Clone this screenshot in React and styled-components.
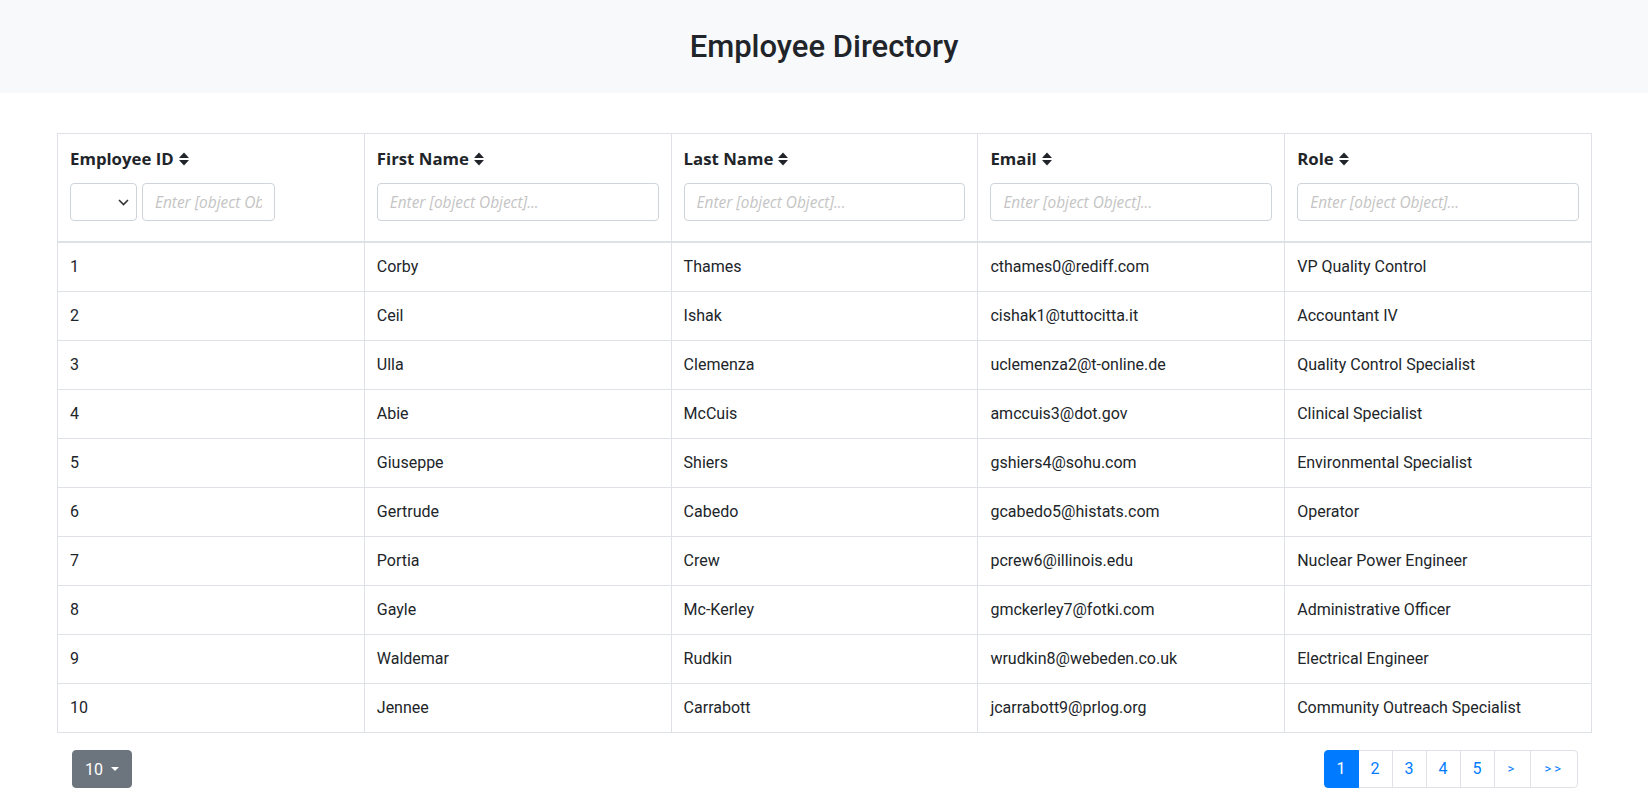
import React from 'react';
import styled, { createGlobalStyle } from 'styled-components';

const GlobalStyle = createGlobalStyle`
  body {
    margin: 0;
    font-family: 'Segoe UI', Roboto, 'Liberation Sans', sans-serif;
    font-size: 16px;
    line-height: 1.5;
    color: #212529;
    background: #fff;
  }
  * {
    box-sizing: border-box;
  }
`;

const Banner = styled.header`
  display: flex;
  align-items: center;
  justify-content: center;
  height: 93px;
  background-color: #f8f9fa;
`;

const Title = styled.h2`
  margin: 0;
  font-size: 31px;
  font-weight: 500;
  line-height: 1.2;
`;

const Main = styled.main`
  padding: 40px 56px 0 57px;
`;

const Table = styled.table`
  width: 100%;
  table-layout: fixed;
  border-collapse: collapse;
  border: 1px solid #dee2e6;
`;

const Th = styled.th`
  padding: 12px;
  text-align: left;
  vertical-align: top;
  border: 1px solid #dee2e6;
  border-bottom: 2px solid #dee2e6;
  font-family: 'Open Sans', Roboto, sans-serif;
  font-size: 16.8px;
  font-weight: 700;
`;

const Td = styled.td`
  padding: 12px;
  line-height: 24px;
  border: 1px solid #dee2e6;
`;

const HeadLabel = styled.div`
  display: flex;
  align-items: center;
  gap: 5px;
  height: 24px;
  padding-top: 2px;
`;

const FilterRow = styled.div`
  display: flex;
  gap: 5px;
  margin: 13px 0 8px;
`;

const TextInput = styled.input`
  width: ${(p) => p.$width || '100%'};
  height: 38px;
  padding: 6px 12px;
  font-family: 'Open Sans', Roboto, sans-serif;
  font-size: 15.4px;
  color: #495057;
  border: 1px solid #ced4da;
  border-radius: 4px;
  outline: none;

  &::placeholder {
    color: #c4c4c4;
    font-style: italic;
  }
`;

const SelectWrap = styled.div`
  position: relative;
  width: 67px;
  flex-shrink: 0;
`;

const Select = styled.select`
  width: 100%;
  height: 38px;
  appearance: none;
  background: #fff;
  border: 1px solid #ced4da;
  border-radius: 4px;
  padding: 6px 12px;
`;

const Chevron = styled.svg`
  position: absolute;
  right: 8px;
  top: 16px;
  pointer-events: none;
`;

const Footer = styled.div`
  display: flex;
  justify-content: space-between;
  align-items: center;
  padding: 0 14px 0 15px;
  margin-top: 17px;
`;

const SizeButton = styled.button`
  display: flex;
  align-items: center;
  gap: 8px;
  height: 38px;
  padding: 0 12px;
  font-family: inherit;
  font-size: 16px;
  color: #fff;
  background-color: #6c757d;
  border: 1px solid #6c757d;
  border-radius: 4px;
`;

const Caret = styled.span`
  width: 0;
  height: 0;
  border-top: 4.5px solid #fff;
  border-left: 4.5px solid transparent;
  border-right: 4.5px solid transparent;
`;

const Pagination = styled.ul`
  display: flex;
  margin: 0;
  padding: 0;
  list-style: none;
`;

const PageLink = styled.li`
  display: flex;
  align-items: center;
  justify-content: center;
  height: 38px;
  padding: 0 ${(p) => (p.$arrow ? '13px' : '12px')};
  margin-left: -1px;
  font-size: ${(p) => (p.$arrow ? '13px' : '16px')};
  letter-spacing: ${(p) => (p.$arrow ? '3px' : '0')};
  color: ${(p) => (p.$active ? '#fff' : '#007bff')};
  background-color: ${(p) => (p.$active ? '#007bff' : '#fff')};
  border: 1px solid ${(p) => (p.$active ? '#007bff' : '#dee2e6')};
  position: ${(p) => (p.$active ? 'relative' : 'static')};
  z-index: ${(p) => (p.$active ? 1 : 0)};

  &:first-child {
    margin-left: 0;
    border-radius: 4px 0 0 4px;
  }
  &:last-child {
    border-radius: 0 4px 4px 0;
  }
`;

function SortIcon() {
  return (
    <svg width="10" height="14" viewBox="0 0 10 14">
      <path d="M5 0.5 L9.6 5.4 Q9.9 6 9.2 6 L0.8 6 Q0.1 6 0.4 5.4 Z" fill="#212529" />
      <path d="M5 13.5 L9.6 8.6 Q9.9 8 9.2 8 L0.8 8 Q0.1 8 0.4 8.6 Z" fill="#212529" />
    </svg>
  );
}

const columns = [
  { key: 'id', label: 'Employee ID' },
  { key: 'first', label: 'First Name' },
  { key: 'last', label: 'Last Name' },
  { key: 'email', label: 'Email' },
  { key: 'role', label: 'Role' },
];

const employees = [
  [1, 'Corby', 'Thames', 'cthames0@rediff.com', 'VP Quality Control'],
  [2, 'Ceil', 'Ishak', 'cishak1@tuttocitta.it', 'Accountant IV'],
  [3, 'Ulla', 'Clemenza', 'uclemenza2@t-online.de', 'Quality Control Specialist'],
  [4, 'Abie', 'McCuis', 'amccuis3@dot.gov', 'Clinical Specialist'],
  [5, 'Giuseppe', 'Shiers', 'gshiers4@sohu.com', 'Environmental Specialist'],
  [6, 'Gertrude', 'Cabedo', 'gcabedo5@histats.com', 'Operator'],
  [7, 'Portia', 'Crew', 'pcrew6@illinois.edu', 'Nuclear Power Engineer'],
  [8, 'Gayle', 'Mc-Kerley', 'gmckerley7@fotki.com', 'Administrative Officer'],
  [9, 'Waldemar', 'Rudkin', 'wrudkin8@webeden.co.uk', 'Electrical Engineer'],
  [10, 'Jennee', 'Carrabott', 'jcarrabott9@prlog.org', 'Community Outreach Specialist'],
];

const pages = ['1', '2', '3', '4', '5'];

export default function App() {
  return (
    <>
      <GlobalStyle />
      <Banner>
        <Title>Employee Directory</Title>
      </Banner>
      <Main>
        <Table>
          <thead>
            <tr>
              {columns.map((col) => (
                <Th key={col.key}>
                  <HeadLabel>
                    {col.label}
                    <SortIcon />
                  </HeadLabel>
                  <FilterRow>
                    {col.key === 'id' ? (
                      <>
                        <SelectWrap>
                          <Select defaultValue="">
                            <option value="" />
                          </Select>
                          <Chevron width="11" height="7" viewBox="0 0 11 7">
                            <path d="M1 1 L5.5 5.5 L10 1" fill="none" stroke="#333" strokeWidth="1.6" />
                          </Chevron>
                        </SelectWrap>
                        <TextInput $width="133px" placeholder="Enter [object Object]..." />
                      </>
                    ) : (
                      <TextInput placeholder="Enter [object Object]..." />
                    )}
                  </FilterRow>
                </Th>
              ))}
            </tr>
          </thead>
          <tbody>
            {employees.map((row) => (
              <tr key={row[0]}>
                {row.map((cell, i) => (
                  <Td key={i}>{cell}</Td>
                ))}
              </tr>
            ))}
          </tbody>
        </Table>
        <Footer>
          <SizeButton>
            10
            <Caret />
          </SizeButton>
          <Pagination>
            {pages.map((p) => (
              <PageLink key={p} $active={p === '1'}>{p}</PageLink>
            ))}
            <PageLink $arrow>&gt;</PageLink>
            <PageLink $arrow>&gt;&gt;</PageLink>
          </Pagination>
        </Footer>
      </Main>
    </>
  );
}
